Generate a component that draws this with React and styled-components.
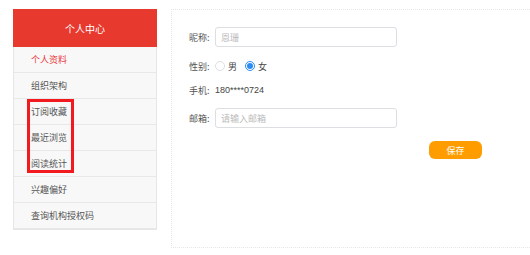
import React from "react";
import styled, { createGlobalStyle } from "styled-components";

const GlobalStyle = createGlobalStyle`
  body {
    margin: 0;
    background: #fff;
    font-family: "Noto Sans CJK SC", "Liberation Sans", sans-serif;
  }
`;

const menu = ["个人资料", "组织架构", "订阅收藏", "最近浏览", "阅读统计", "兴趣偏好", "查询机构授权码"];

export default function App() {
  return (
    <Page>
      <GlobalStyle />
      <Sidebar>
        <SideHeader>个人中心</SideHeader>
        <Menu>
          {menu.map((m, i) => (
            <MenuItem key={m} $active={i === 0}>{m}</MenuItem>
          ))}
          <Marker />
        </Menu>
      </Sidebar>

      <Main>
        <Form>
          <Row $top={0}>
            <Label>昵称:</Label>
            <Input placeholder="恩珊" readOnly />
          </Row>
          <Row $top={11} $short>
            <Label>性别:</Label>
            <RadioGroup>
              <Radio><Dot /><span>男</span></Radio>
              <Radio><Dot $checked /><span>女</span></Radio>
            </RadioGroup>
          </Row>
          <Row $top={8} $short>
            <Label>手机:</Label>
            <Value>180****0724</Value>
          </Row>
          <Row $top={10}>
            <Label>邮箱:</Label>
            <Input placeholder="请输入邮箱" readOnly />
          </Row>
          <Actions>
            <SaveButton>保存</SaveButton>
          </Actions>
        </Form>
      </Main>
    </Page>
  );
}

const Page = styled.div`
  display: flex;
  gap: 14px;
  padding: 9px 0 0 13px;
  width: 530px;
  height: 255px;
  box-sizing: border-box;
`;

const Sidebar = styled.aside`
  width: 144px;
  flex-shrink: 0;
`;

const SideHeader = styled.div`
  height: 38px;
  background: #e8392e;
  color: #fff;
  font-size: 10px;
  display: flex;
  align-items: center;
  justify-content: center;
`;

const Menu = styled.ul`
  position: relative;
  margin: 0;
  padding: 0;
  list-style: none;
  background: #f8f8f8;
  border: 1px solid #e6e6e6;
  border-top: none;
`;

const MenuItem = styled.li`
  height: 26px;
  box-sizing: border-box;
  padding-left: 17px;
  display: flex;
  align-items: center;
  font-size: 9px;
  color: ${(p) => (p.$active ? "#e8383d" : "#555")};
  border-bottom: 1px solid #e8e8e8;
  &:last-child {
    border-bottom: none;
  }
`;

const Marker = styled.div`
  position: absolute;
  left: 13px;
  top: 52px;
  width: 47px;
  height: 74px;
  box-sizing: border-box;
  border: 3px solid #f21a1f;
`;

const Main = styled.section`
  flex: 1;
  height: 239px;
  box-sizing: border-box;
  border: 1px dotted #e6e6e6;
  border-right: none;
  background: #fff;
`;

const Form = styled.div`
  display: flex;
  flex-direction: column;
  padding: 17px 0 0 17px;
  width: 293px;
  font-size: 9px;
  color: #555;
`;

const Row = styled.div`
  display: flex;
  align-items: center;
  height: ${(p) => (p.$short ? "16px" : "20px")};
  margin-top: ${(p) => p.$top}px;
`;

const Label = styled.span`
  width: 26px;
  flex-shrink: 0;
`;

const Input = styled.input`
  width: 182px;
  height: 20px;
  box-sizing: border-box;
  border: 1px solid #dcdee2;
  border-radius: 3px;
  padding: 0 5px;
  font-size: 9px;
  font-family: inherit;
  outline: none;
  &::placeholder {
    color: #bbb;
  }
`;

const RadioGroup = styled.div`
  display: flex;
  gap: 8px;
`;

const Radio = styled.label`
  display: flex;
  align-items: center;
  gap: 3px;
  color: #444;
`;

const Dot = styled.span`
  width: 10px;
  height: 10px;
  box-sizing: border-box;
  border-radius: 50%;
  border: 1px solid ${(p) => (p.$checked ? "#2d8cf0" : "#dcdee2")};
  background: #fff;
  display: flex;
  align-items: center;
  justify-content: center;
  &::after {
    content: "";
    width: 6px;
    height: 6px;
    border-radius: 50%;
    background: ${(p) => (p.$checked ? "#2d8cf0" : "transparent")};
  }
`;

const Value = styled.span`
  color: #444;
  font-family: "Liberation Sans", "Noto Sans CJK SC", sans-serif;
`;

const Actions = styled.div`
  display: flex;
  justify-content: flex-end;
  margin-top: 13px;
`;

const SaveButton = styled.button`
  width: 53px;
  height: 18px;
  border: none;
  border-radius: 6px;
  background: #ff9d00;
  color: #fff;
  font-size: 9px;
  font-family: inherit;
  padding: 0;
`;
